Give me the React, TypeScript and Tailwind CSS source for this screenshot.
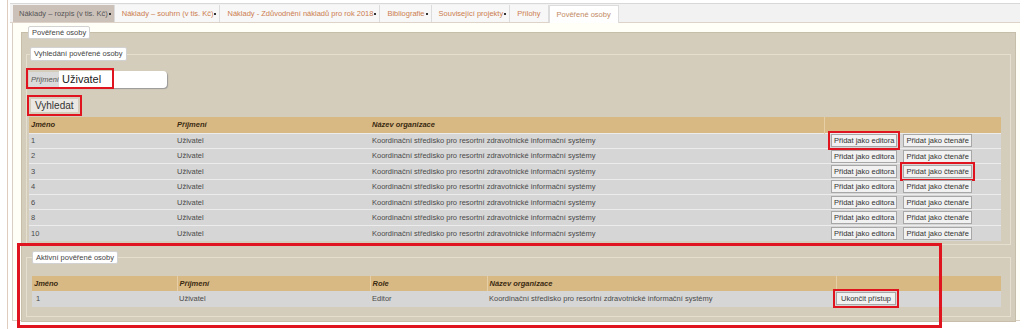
import React from 'react';

const tabs = [
  { label: 'Náklady – rozpis (v tis. Kč)', dot: true, selected: true },
  { label: 'Náklady – souhrn (v tis. Kč)', dot: true },
  { label: 'Náklady - Zdůvodnění nákladů pro rok 2018', dot: true },
  { label: 'Bibliografie', dot: true },
  { label: 'Související projekty', dot: true },
  { label: 'Přílohy', dot: false },
  { label: 'Pověřené osoby', dot: false, active: true },
];

const ORG = 'Koordinační středisko pro resortní zdravotnické informační systémy';
const found = ['1', '2', '3', '4', '6', '8', '10'];

const Btn = ({ children, mark, wide }: { children: React.ReactNode; mark?: boolean; wide?: boolean }) => (
  <button
    className={`h-[13px] ${wide ? 'px-[4px]' : 'px-[2px]'} border border-[#a7a7a7] bg-[#f1f1f1] text-[#333] leading-[11px] ${
      mark ? 'outline-[2.5px] outline-[#e0141f] outline-offset-[1px]' : ''
    }`}
  >
    {children}
  </button>
);

const Legend = ({ children, className }: { children: React.ReactNode; className: string }) => (
  <legend className={`bg-white border border-[#d2d2d2] rounded-[2px] px-[3px] h-[13px] leading-[11px] text-[#444] ${className}`}>
    {children}
  </legend>
);

export default function App() {
  return (
    <div className="w-[1024px] h-[329px] overflow-hidden bg-white font-['Liberation_Sans',Arial,sans-serif] text-[7.5px] text-[#4a4a4a] relative">
      <div className="ml-[7px] mr-[4px] h-full border-l border-[#e0ccbe] pt-[3px] pl-[2px]">
        {/* tabs */}
        <div className="h-[20px] border-t border-[#d8d8d8] border-b border-b-[#ddd3c8] bg-[#f2f2f2] flex items-end pl-[3px]">
          {tabs.map((t) => (
            <div
              key={t.label}
              className={`h-[17px] flex items-center border-r border-[#dcdcdc] ${t.dot ? 'pr-[3px]' : 'pr-[7px]'} ${
                t.selected
                  ? 'bg-[#ccc1b9] text-[#555] pl-[6px]'
                  : t.active
                  ? 'bg-white text-[#c28a62] pl-[7px] border-l border-t border-[#d2d2d2] -mb-px h-[18px]'
                  : 'bg-[#f7f7f7] text-[#cc7d4f] pl-[7px]'
              }`}
            >
              <span>{t.label}</span>
              {t.dot && <span className="inline-block w-[2px] h-[2px] bg-[#333] ml-[1px] mt-[1px]" />}
            </div>
          ))}
        </div>

        {/* panel */}
        <div className="ml-[2px] border-l border-b border-[#d9cfc3] bg-[#fffef7] pl-[8px] pr-[4px] pt-[3px] h-[298px]">
          <fieldset className="border border-[#c6bea9] bg-[#d4cdbb] pl-[4px] pr-[4px] pb-[4px] min-w-0">
            <Legend className="ml-[2px]">Pověřené osoby</Legend>

            {/* search */}
            <fieldset className="mt-[8px] border border-[#e5dfd0] pl-[2px] pr-[4px] pb-[3px] min-w-0">
              <Legend className="ml-[1px] h-[14px] leading-[12px]">Vyhledání pověřené osoby</Legend>

              <div className="relative mt-[10px] flex items-center h-[17px] w-[138px]">
                <span className="h-[16px] w-[30px] bg-[#dadada] italic text-[#555] flex items-center pl-[2px]">Příjmení</span>
                <span className="h-[17px] flex-1 bg-white rounded-r-[4px] shadow-[1px_1px_1px_#9a9a9a] text-[11px] text-[#222] flex items-center pl-[3px]">
                  Uživatel
                </span>
                <div className="absolute left-[-3px] top-[-3px] w-[88px] h-[21px] border-[2.5px] border-[#e0141f]" />
              </div>

              <div className="mt-[11px] ml-[2px]">
                <button className="h-[13px] px-[4px] bg-[#ebe7e2] text-[10px] leading-[12px] text-[#333] outline-[2.5px] outline-[#e0141f] outline-offset-[2px]">
                  Vyhledat
                </button>
              </div>

              <table className="mt-[5px] w-[972px] table-fixed border-collapse">
                <colgroup>
                  <col className="w-[146px]" />
                  <col className="w-[195px]" />
                  <col className="w-[454px]" />
                  <col className="w-[177px]" />
                </colgroup>
                <thead>
                  <tr className="h-[16px] bg-[#d9b983] text-[#3a2a12] font-bold italic text-left">
                    <th className="pl-[2px] font-bold">Jméno</th>
                    <th className="pl-[2px] font-bold">Příjmení</th>
                    <th className="pl-[2px] font-bold">Název organizace</th>
                    <th className="border-l border-[#e6cfa6]" />
                  </tr>
                </thead>
                <tbody>
                  {found.map((n, i) => (
                    <tr key={n} className="h-[15.4px] bg-[#d6d6d6] border-t border-[#ececec]">
                      <td className="pl-[2px]">{n}</td>
                      <td className="pl-[2px]">Uživatel</td>
                      <td className="pl-[2px]">{ORG}</td>
                      <td className="pl-[7px]">
                        <div className="flex gap-[6px]">
                          <Btn mark={i === 0}>Přidat jako editora</Btn>
                          <Btn mark={i === 2}>Přidat jako čtenáře</Btn>
                        </div>
                      </td>
                    </tr>
                  ))}
                </tbody>
              </table>
            </fieldset>

            {/* active */}
            <fieldset className="mt-[6px] border border-[#e5dfd0] pl-[5px] pr-[5px] pb-[9px] min-w-0">
              <Legend className="ml-[0px]">Aktivní pověřené osoby</Legend>
              <table className="mt-[12px] w-[969px] table-fixed border-collapse">
                <colgroup>
                  <col className="w-[145px]" />
                  <col className="w-[193px]" />
                  <col className="w-[117px]" />
                  <col className="w-[349px]" />
                  <col className="w-[165px]" />
                </colgroup>
                <thead>
                  <tr className="h-[15px] bg-[#d9b983] text-[#3a2a12] italic text-left">
                    <th className="pl-[2px] font-bold">Jméno</th>
                    <th className="pl-[2px] font-bold border-l border-[#e6cfa6]">Příjmení</th>
                    <th className="pl-[2px] font-bold border-l border-[#e6cfa6]">Role</th>
                    <th className="pl-[2px] font-bold border-l border-[#e6cfa6]">Název organizace</th>
                    <th className="border-l border-[#e6cfa6]" />
                  </tr>
                </thead>
                <tbody>
                  <tr className="h-[16px] bg-[#d6d6d6]">
                    <td className="pl-[4px]">1</td>
                    <td className="pl-[2px]">Uživatel</td>
                    <td className="pl-[2px]">Editor</td>
                    <td className="pl-[2px]">{ORG}</td>
                    <td>
                      <Btn mark wide>Ukončit přístup</Btn>
                    </td>
                  </tr>
                </tbody>
              </table>
            </fieldset>
          </fieldset>
        </div>
      </div>

      {/* annotation box */}
      <div className="absolute left-[17px] top-[243px] w-[925px] h-[85px] border-[3px] border-[#e0141f]" />
    </div>
  );
}
